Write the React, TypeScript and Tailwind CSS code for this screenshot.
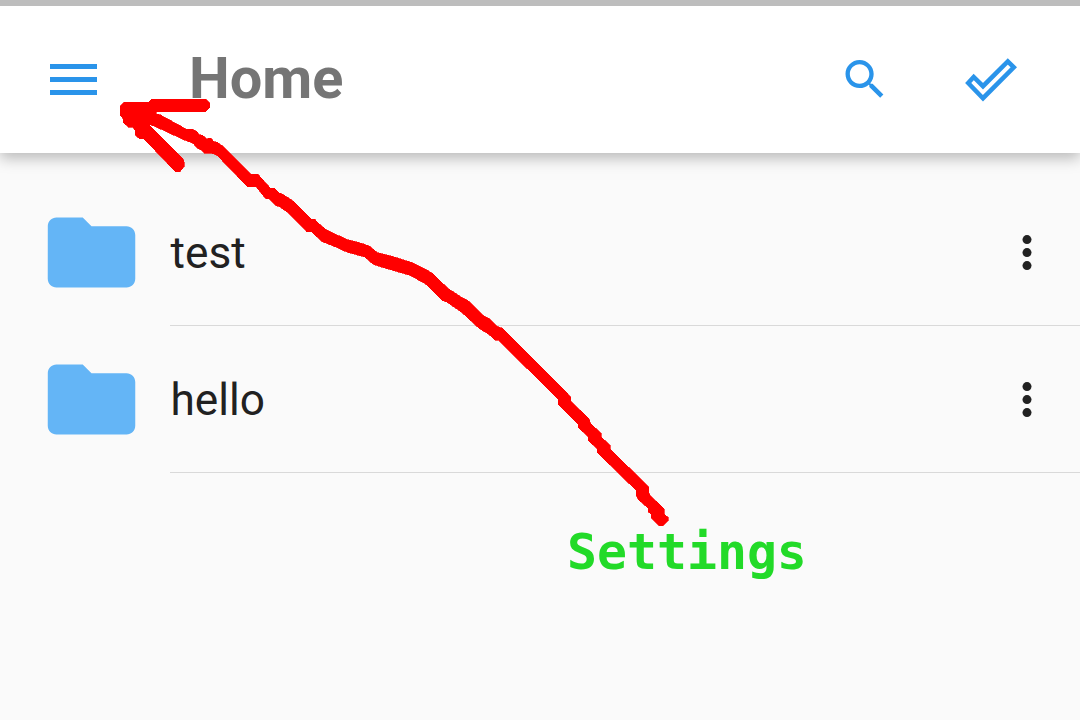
import React from "react";

const FolderIcon = () => (
  <svg viewBox="0 0 24 24" className="h-[105px] w-[105px] shrink-0 fill-[#64b5f6]">
    <path d="M10 4H4c-1.1 0-1.99.9-1.99 2L2 18c0 1.1.9 2 2 2h16c1.1 0 2-.9 2-2V8c0-1.1-.9-2-2-2h-8l-2-2z" />
  </svg>
);

const MoreIcon = () => (
  <svg viewBox="0 0 20 40" className="h-10 w-5 fill-[#212121]">
    <circle cx="10" cy="6.6" r="4.5" />
    <circle cx="10" cy="19.6" r="4.5" />
    <circle cx="10" cy="32.6" r="4.5" />
  </svg>
);

const Row = ({ name }: { name: string }) => (
  <li className="flex h-[147px] items-stretch pl-[39px]">
    <div className="flex w-[131px] shrink-0 items-center pb-px">
      <FolderIcon />
    </div>
    <div className="flex flex-1 items-center justify-between border-b border-[#d9d9d9] pt-0.5 pr-[43px]">
      <span className="pl-[0.5px] text-[44.2px] leading-[52px] text-[#212121]">{name}</span>
      <button aria-label="More">
        <MoreIcon />
      </button>
    </div>
  </li>
);

const arrowPoints =
  "360,320 372,306 446,306 455,297 617,297 629,309 629,323 617,335 469,335 468,342 480,344 560,388 578,387 592,396 596,404 608,406 620,416 633,414 640,424 652,427 668,438 754,523 773,522 811,564 822,564 836,578 850,584 878,602 933,657 944,657 952,667 980,690 997,698 1040,718 1085,730 1108,738 1132,758 1180,770 1240,789 1295,818 1345,866 1390,895 1405,902 1450,947 1467,955 1492,980 1507,984 1712,1190 1713,1204 1766,1255 1772,1270 1803,1300 1803,1310 1830,1336 1830,1346 1946,1461 1947,1478 1952,1488 1984,1518 1992,1527 1992,1542 2004,1552 2004,1563 1990,1577 1976,1577 1954,1555 1953,1542 1944,1535 1944,1524 1916,1500 1908,1486 1908,1471 1791,1357 1791,1346 1764,1321 1764,1310 1735,1283 1734,1273 1728,1266 1674,1213 1674,1198 1495,1020 1485,1020 1465,1002 1438,986 1385,937 1340,906 1326,901 1278,853 1230,826 1140,800 1118,792 1094,771 1040,756 1000,738 966,725 934,695 920,695 865,639 840,621 828,617 808,597 796,595 768,560 742,560 652,467 636,460 612,459 604,451 591,444 579,430 553,420 462,378 455,376 444,372 549,477 552,485 552,500 540,515 526,515 431,416 418,416 405,405 405,391 397,381 385,381 370,368 369,356 360,345";

export default function App() {
  return (
    <div className="relative flex h-[720px] w-[1080px] flex-col overflow-hidden bg-[#fafafa] font-['Roboto',sans-serif]">
      <div className="z-10 h-1.5 shrink-0 bg-[#bdbdbd]" />
      <header className="flex h-[147px] shrink-0 items-center bg-white pr-[62px] pb-px pl-[48px] shadow-[0_5px_14px_rgba(0,0,0,0.27)]">
        <button aria-label="Menu">
          <svg viewBox="0 0 52 36" className="h-9 w-[52px] fill-[#2a94ea]">
            <path d="M2 3h47v5H2zM2 16h47v5H2zM2 29h47v5H2z" />
          </svg>
        </button>
        <h1 className="ml-[89px] pb-[3px] text-[57.7px] leading-[68px] font-bold text-[#757575]">Home</h1>
        <div className="ml-auto flex items-center">
          <button aria-label="Search" className="mr-[73px]">
            <svg viewBox="0 -0.2 24 24" className="h-[52px] w-[52px] fill-[#2a94ea]">
              <path d="M15.5 14h-.79l-.28-.27C15.41 12.59 16 11.11 16 9.5 16 5.91 13.09 3 9.5 3S3 5.91 3 9.5 5.91 16 9.5 16c1.61 0 3.09-.59 4.23-1.57l.27.28v.79l5 4.99L20.49 19l-4.99-5zm-6 0C7.01 14 5 11.99 5 9.5S7.01 5 9.5 5 14 7.01 14 9.5 11.99 14 9.5 14z" />
            </svg>
          </button>
          <button aria-label="Select all">
            <svg
              viewBox="0 0 54 46"
              className="h-[46px] w-[54px] fill-none stroke-[#2a94ea] [stroke-width:4.5]"
            >
              <path d="M4.2 27L9.7 20.9L19 30.2L43.8 5.5L49.8 11.3L19 42.2Z" strokeLinejoin="miter" />
            </svg>
          </button>
        </div>
      </header>
      <ul className="pt-[26px]">
        <Row name="test" />
        <Row name="hello" />
      </ul>
      <p className="mt-[50px] ml-[567px] font-['DejaVu_Sans_Mono',monospace] text-[49.8px] leading-[58px] font-bold text-[#22da28]">
        Settings
      </p>
      <svg
        viewBox="0 0 3240 2160"
        className="pointer-events-none absolute inset-0 h-[720px] w-[1080px] fill-[#ff0000] stroke-[#ff0000] [stroke-width:2]"
        shapeRendering="crispEdges"
      >
        <polygon points={arrowPoints} />
      </svg>
    </div>
  );
}
